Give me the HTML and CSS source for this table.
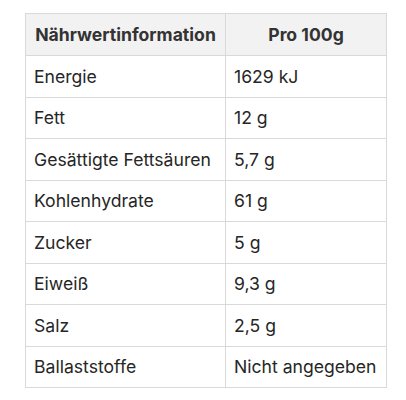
FILE: index.html
```html
<!DOCTYPE html>
<html lang="de">
<head>
<meta charset="utf-8">
<title>Nährwertinformation</title>
<link rel="stylesheet" href="styles.css">
</head>
<body>
<table class="nutri">
  <colgroup>
    <col class="col-name">
    <col class="col-value">
  </colgroup>
  <thead>
    <tr><th>Nährwertinformation</th><th>Pro 100g</th></tr>
  </thead>
  <tbody>
    <tr><td>Energie</td><td>1629 kJ</td></tr>
    <tr><td>Fett</td><td>12 g</td></tr>
    <tr><td>Gesättigte Fettsäuren</td><td>5,7 g</td></tr>
    <tr><td>Kohlenhydrate</td><td>61 g</td></tr>
    <tr><td>Zucker</td><td>5 g</td></tr>
    <tr><td>Eiweiß</td><td>9,3 g</td></tr>
    <tr><td>Salz</td><td>2,5 g</td></tr>
    <tr><td>Ballaststoffe</td><td>Nicht angegeben</td></tr>
  </tbody>
</table>
</body>
</html>
```
FILE: styles.css
```css
html, body {
  margin: 0;
  padding: 0;
  background: #ffffff;
}
body {
  padding: 13px 0 0 25px;
  font-family: Inter, "Liberation Sans", sans-serif;
  color: #262626;
}
.nutri {
  border-collapse: collapse;
  border: 1px solid #d9d9d9;
  font-size: 17.6px;
  table-layout: fixed;
  width: 361px;
}
.col-name {
  width: 200px;
}
.col-value {
  width: 161px;
}
.nutri th,
.nutri td {
  border: 1px solid #d9d9d9;
  padding: 0 8px;
  text-align: left;
  font-weight: 400;
  white-space: nowrap;
}
.nutri th {
  height: 41px;
  background: #f2f2f2;
  font-weight: 700;
  text-align: center;
  color: #333333;
}
.nutri td {
  height: 40.5px;
}
```
